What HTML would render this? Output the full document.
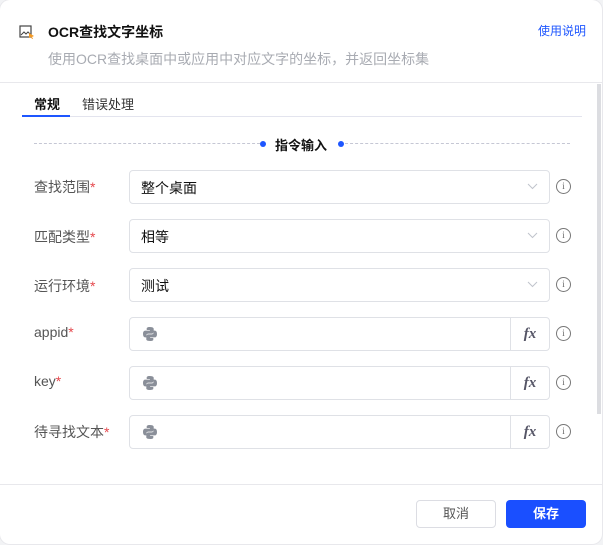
<!DOCTYPE html><html><head><meta charset="utf-8"><style>
body{margin:0;width:603px;height:545px;background:#f2f3f5;font-family:"Liberation Sans","Noto Sans CJK SC",sans-serif;overflow:hidden;position:relative}
.card{position:absolute;left:0;top:0;width:602px;height:544px;background:#fff;border-radius:10px;box-shadow:0 0 0 1px #e8e8ec}
.a{position:absolute}
.lbl{position:absolute;left:34px;font-size:14px;color:#555}
.lbl i{color:#e5484d;font-style:normal}
.box{position:absolute;left:129px;width:419px;height:32px;border:1px solid #dfe1e6;border-radius:4px;font-size:14px;color:#111}
.box span{position:absolute;left:11px;top:7px}
.fx{position:absolute;right:0;top:0;width:38px;height:32px;border-left:1px solid #dfe1e6;font-family:"Liberation Serif",serif;font-style:italic;font-weight:bold;font-size:15px;color:#556;text-align:center;line-height:32px}
.info{position:absolute;left:556px;width:13px;height:13px;border:1px solid #777;border-radius:50%;font-size:9px;color:#666;text-align:center;line-height:13px;font-family:"Liberation Serif",serif}
</style></head><body><div class="card">
<svg class="a" style="left:19px;top:25px" width="16" height="15" viewBox="0 0 16 15"><rect x="1" y="1" width="11" height="11" fill="none" stroke="#444" stroke-width="1.2"/><path d="M2 10l3-3 2 2 2-2 3 3" fill="none" stroke="#444"/><path d="M10 8l5 3-2 1 1 2-1 0-1-2-2 1z" fill="#f59a23"/></svg>
<div class="a" style="left:48px;top:22px;font-size:14px;font-weight:bold;color:#111">OCR查找文字坐标</div>
<div class="a" style="left:48px;top:49px;font-size:14px;color:#a8abb2">使用OCR查找桌面中或应用中对应文字的坐标，并返回坐标集</div>
<div class="a" style="left:538px;top:22px;font-size:12px;color:#1e56ff">使用说明</div>
<div class="a" style="left:0;top:82px;width:602px;height:1px;background:#e8e8ec"></div>
<div class="a" style="left:34px;top:94px;font-size:13px;color:#111;font-weight:bold">常规</div>
<div class="a" style="left:82px;top:94px;font-size:13px;color:#333">错误处理</div>
<div class="a" style="left:22px;top:116px;width:560px;height:1px;background:#e3e4ee"></div>
<div class="a" style="left:22px;top:115px;width:48px;height:2px;background:#1e56ff"></div>
<div class="a" style="left:34px;top:143px;width:226px;border-top:1px dashed #c5c7d4"></div>
<div class="a" style="left:345px;top:143px;width:225px;border-top:1px dashed #c5c7d4"></div>
<div class="a" style="left:260px;top:141px;width:6px;height:6px;border-radius:50%;background:#1e56ff"></div>
<div class="a" style="left:338px;top:141px;width:6px;height:6px;border-radius:50%;background:#1e56ff"></div>
<div class="a" style="left:275px;top:135px;font-size:13px;font-weight:bold;color:#111">指令输入</div>

<div class="lbl" style="top:177px">查找范围<i>*</i></div>
<div class="box" style="top:170px"><span>整个桌面</span><svg class="a" style="right:11px;top:12px" width="11" height="7"><path d="M1 1l4.5 4.5L10 1" fill="none" stroke="#c0c4cc"/></svg></div>
<div class="info" style="top:179px">i</div>
<div class="lbl" style="top:227px">匹配类型<i>*</i></div>
<div class="box" style="top:219px"><span>相等</span><svg class="a" style="right:11px;top:12px" width="11" height="7"><path d="M1 1l4.5 4.5L10 1" fill="none" stroke="#c0c4cc"/></svg></div>
<div class="info" style="top:228px">i</div>
<div class="lbl" style="top:276px">运行环境<i>*</i></div>
<div class="box" style="top:268px"><span>测试</span><svg class="a" style="right:11px;top:12px" width="11" height="7"><path d="M1 1l4.5 4.5L10 1" fill="none" stroke="#c0c4cc"/></svg></div>
<div class="info" style="top:277px">i</div>

<div class="lbl" style="top:324px">appid<i>*</i></div>
<div class="box" style="top:317px"><svg class="a" style="left:12px;top:8px" width="16" height="16" viewBox="0 0 16 16"><path d="M7.8 1C4.5 1 4.7 2.4 4.7 2.4V4h3.2v.6H3.4S1 4.3 1 7.9s2.1 3.5 2.1 3.5h1.2V9.7s-.1-2.1 2-2.1h3.4s2 0 2-1.9V2.9S12 1 7.8 1z M8.2 15c3.3 0 3.1-1.4 3.1-1.4V12H8.1v-.6h4.5S15 11.7 15 8.1s-2.1-3.5-2.1-3.5h-1.2v1.7s.1 2.1-2 2.1H6.3s-2 0-2 1.9v3.1S4 15 8.2 15z" fill="#8a8f99"/></svg><div class="fx">fx</div></div>
<div class="info" style="top:326px">i</div>
<div class="lbl" style="top:373px">key<i>*</i></div>
<div class="box" style="top:366px"><svg class="a" style="left:12px;top:8px" width="16" height="16" viewBox="0 0 16 16"><path d="M7.8 1C4.5 1 4.7 2.4 4.7 2.4V4h3.2v.6H3.4S1 4.3 1 7.9s2.1 3.5 2.1 3.5h1.2V9.7s-.1-2.1 2-2.1h3.4s2 0 2-1.9V2.9S12 1 7.8 1z M8.2 15c3.3 0 3.1-1.4 3.1-1.4V12H8.1v-.6h4.5S15 11.7 15 8.1s-2.1-3.5-2.1-3.5h-1.2v1.7s.1 2.1-2 2.1H6.3s-2 0-2 1.9v3.1S4 15 8.2 15z" fill="#8a8f99"/></svg><div class="fx">fx</div></div>
<div class="info" style="top:375px">i</div>
<div class="lbl" style="top:422px">待寻找文本<i>*</i></div>
<div class="box" style="top:415px"><svg class="a" style="left:12px;top:8px" width="16" height="16" viewBox="0 0 16 16"><path d="M7.8 1C4.5 1 4.7 2.4 4.7 2.4V4h3.2v.6H3.4S1 4.3 1 7.9s2.1 3.5 2.1 3.5h1.2V9.7s-.1-2.1 2-2.1h3.4s2 0 2-1.9V2.9S12 1 7.8 1z M8.2 15c3.3 0 3.1-1.4 3.1-1.4V12H8.1v-.6h4.5S15 11.7 15 8.1s-2.1-3.5-2.1-3.5h-1.2v1.7s.1 2.1-2 2.1H6.3s-2 0-2 1.9v3.1S4 15 8.2 15z" fill="#8a8f99"/></svg><div class="fx">fx</div></div>
<div class="info" style="top:424px">i</div>

<div class="a" style="left:597px;top:84px;width:4px;height:330px;background:#dcdde1"></div>
<div class="a" style="left:0;top:484px;width:602px;height:1px;background:#e8e8ec"></div>
<div class="a" style="left:416px;top:500px;width:78px;height:26px;border:1px solid #dcdde3;border-radius:4px;font-size:13px;color:#555;text-align:center;line-height:26px">取消</div>
<div class="a" style="left:506px;top:500px;width:80px;height:28px;background:#1a4fff;border-radius:4px;font-size:13px;color:#fff;font-weight:bold;text-align:center;line-height:28px">保存</div>
</div></body></html>
